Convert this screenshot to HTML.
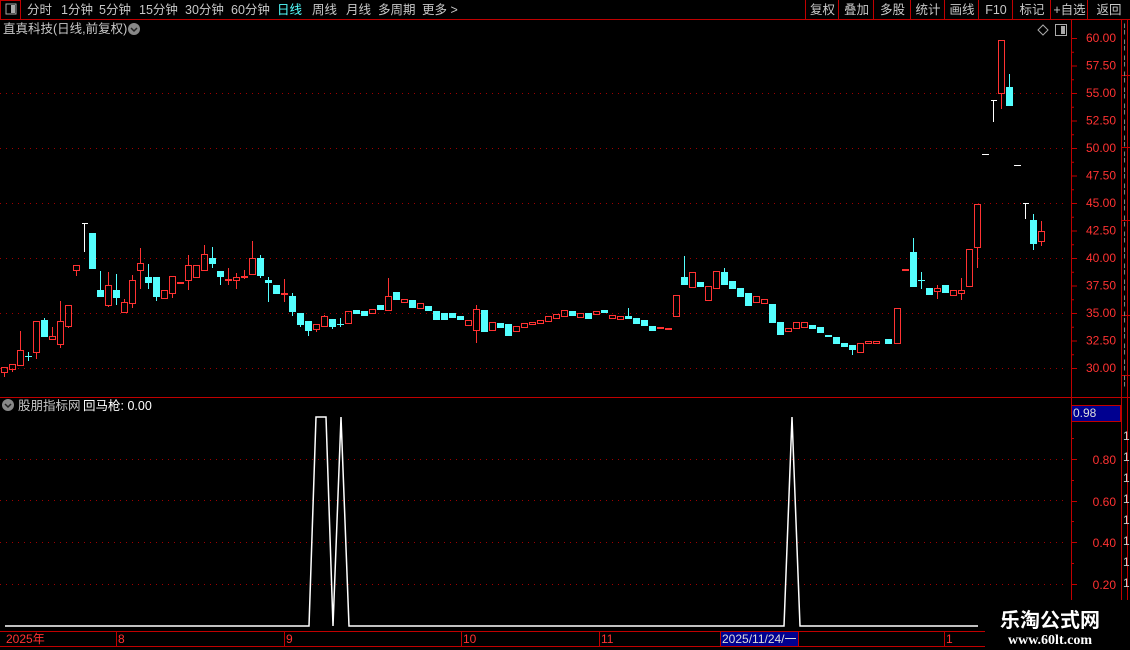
<!DOCTYPE html>
<html><head><meta charset="utf-8"><style>
body{margin:0;background:#000;width:1130px;height:650px;overflow:hidden;font-family:"Liberation Sans","Noto Sans CJK SC",sans-serif;}
svg{position:absolute;left:0;top:0}
</style></head><body>
<svg id="s" width="1130" height="650" xmlns="http://www.w3.org/2000/svg" font-family="Liberation Sans, Noto Sans CJK SC, sans-serif"></svg>
<script>
var s=document.getElementById('s'),h='';
function R(x,y,w,hh,f,st){h+='<rect x="'+x+'" y="'+y+'" width="'+w+'" height="'+hh+'" fill="'+(f||'none')+'"'+(st?' stroke="'+st+'" stroke-width="1"':'')+'/>';}
function L(x1,y1,x2,y2,c,da){h+='<line x1="'+x1+'" y1="'+y1+'" x2="'+x2+'" y2="'+y2+'" stroke="'+c+'" stroke-width="1"'+(da?' stroke-dasharray="'+da+'"':'')+'/>';}
function T(x,y,t,c,sz,a){h+='<text x="'+x+'" y="'+y+'" fill="'+c+'" font-size="'+(sz||12)+'"'+(a?' text-anchor="'+a+'"':'')+'>'+t+'</text>';}
var RED='#ff3232',CY='#54ffff',DR='#c00000';
L(0,19.5,1130,19.5,DR);R(0.5,0.5,20,19,'none',DR);R(6,4,10,10,'none','#aaa');R(11,5,4,8,'#aaa');
var tb=[['分时',27],['1分钟',61],['5分钟',99],['15分钟',139],['30分钟',185],['60分钟',231],['日线',277],['周线',312],['月线',346],['多周期',378],['更多 >',422]];
tb.forEach(function(a){T(a[1],14,a[0],a[0]=='日线'?CY:'#c8c8c8',12.5)});
var rb=['复权','叠加','多股','统计','画线','F10','标记','+自选','返回'],rx=[806,839,874,911,945,979,1013,1051,1088,1130];
for(var i=0;i<rb.length;i++){L(rx[i]-0.5,0,rx[i]-0.5,19,DR);T((rx[i]+rx[i+1])/2,14,rb[i],'#c8c8c8',12.5,'middle');}
T(3,33,'直真科技(日线,前复权)','#c8c8c8',12.5);h+='<circle cx="134" cy="29" r="6" fill="#888"/><path d="M131 28l3 3 3-3" stroke="#222" stroke-width="1.5" fill="none"/>';
h+='<path d="M1043 25l5 5-5 5-5-5z" stroke="#aaa" fill="none"/>';R(1055.5,24.5,11,11,'none','#aaa');R(1061,26,4,8,'#aaa');
[93,148,203,258,313,368].forEach(function(y){L(0,y+.5,1065,y+.5,'#a00000','1 5')});
[459,500,542,584].forEach(function(y){L(0,y+.5,1065,y+.5,'#a00000','1 5')});
L(1071.5,20,1071.5,630,DR);L(1121.5,20,1121.5,650,DR);L(1127.5,20,1127.5,650,DR);
for(var p=60;p>=30;p-=2.5){var y=38+(60-p)*11;L(1071,y+.5,1077,y+.5,DR);T(1116,y+4,p.toFixed(2),RED,12,'end');}
for(var p=58.75;p>29;p-=2.5){var y=38+(60-p)*11;L(1071,y+.5,1074,y+.5,DR);}
[0.8,0.6,0.4,0.2].forEach(function(v){var y=Math.round(626-v*209);L(1071,y+.5,1077,y+.5,DR);T(1116,y+5,v.toFixed(2),RED,12,'end');});
[438,480,521,563,605].forEach(function(y){L(1071,y+.5,1074,y+.5,DR)});
[75,147,220,315,375].forEach(function(y){L(1122,y+.5,1130,y+.5,DR)});
for(var y=32;y<390;y+=16)T(1123,y,'¦','#888',12);
for(var y=440;y<600;y+=21)T(1123,y,'1','#ccc',12);
var C=[[1,'r',367,372,0,377],[9,'r',364,369,0,372],[17,'r',350,365,331,0],[25,'x',356,356,352,361],[33,'r',321,352,0,359],[41,'c',320,337,318,0],[49,'r',336,339,327,340],[57,'r',321,344,301,348],[65,'r',305,326,0,328],[73,'r',265,270,0,276],[81,'w',223,252,223,252],[89,'c',233,269,0,0],[97,'c',290,297,271,0],[105,'r',285,305,272,307],[113,'c',290,298,274,305],[121,'r',302,312,299,313],[129,'r',280,303,275,308],[137,'r',263,270,248,289],[145,'c',277,283,264,289],[153,'c',277,297,0,301],[161,'r',290,298,0,299],[169,'r',276,293,0,298],[177,'d',283,283,0,0],[185,'r',265,280,255,290],[193,'r',265,277,0,0],[201,'r',254,270,245,271],[209,'c',258,264,247,268],[217,'c',271,277,0,285],[225,'d',280,280,268,285],[233,'r',277,280,273,289],[241,'d',277,277,270,279],[249,'r',258,274,241,275],[257,'c',258,276,255,278],[265,'c',280,283,277,302],[273,'c',285,294,0,0],[281,'d',294,294,279,302],[289,'c',296,312,293,316],[297,'c',313,325,0,327],[305,'c',321,331,0,336],[313,'r',324,329,0,332],[321,'r',316,326,315,0],[329,'c',319,327,0,329],[337,'x',324,324,318,327]];
var E=[[345,'r',311,323],[353,'c',310,314],[361,'c',311,316],[369,'r',309,313],[377,'c',305,310],[385,'r',296,310,278],[393,'c',292,300],[401,'r',299,302],[409,'c',300,308],[417,'r',303,308],[425,'c',306,311],[433,'c',311,320],[441,'c',313,320],[449,'c',313,318],[457,'c',316,320],[465,'r',320,325],[473,'r',309,330,305,343],[481,'c',310,332],[489,'r',322,330],[497,'c',323,328],[505,'c',324,336],[513,'r',326,331],[521,'r',323,327],[529,'r',322,324],[537,'r',320,323],[545,'r',316,321],[553,'r',314,318],[561,'r',310,316],[569,'c',311,316],[577,'r',313,317],[585,'c',313,319],[593,'r',311,314],[601,'c',310,313],[609,'r',315,318],[617,'r',316,319],[625,'c',316,319,308],[633,'c',318,324],[641,'c',320,326],[649,'c',326,331],[657,'d',328,328],[665,'d',329,329],[673,'r',295,316],[681,'c',277,285,256],[689,'r',272,287],[697,'c',282,287],[705,'r',286,300],[713,'r',271,288],[721,'c',272,285,268],[729,'c',281,289],[737,'c',288,297],[745,'c',293,306],[753,'r',296,302],[761,'r',299,303],[769,'c',304,323],[777,'c',322,335],[785,'r',328,331],[793,'r',322,328],[801,'r',322,327],[809,'c',325,329],[817,'c',327,333],[825,'c',335,337],[833,'c',337,344],[841,'c',343,347],[849,'c',345,350,0,355],[857,'r',343,352],[865,'r',341,343],[873,'r',341,343],[885,'c',339,344],[894,'r',308,343],[902,'d',270,270],[910,'c',252,287,238,0],[918,'x',280,280,272,289],[926,'c',288,295],[934,'r',288,291,285,299],[942,'c',285,293],[950,'r',290,295],[958,'r',290,293,278,300],[966,'r',249,286],[974,'r',204,247,0,268],[982,'wd',154,154],[990,'w',100,122,100,122],[998,'r',40,93,0,109],[1006,'c',87,106,74,0],[1014,'wd',165,165],[1022,'w',203,219,203,219],[1030,'c',220,244,214,250],[1038,'r',231,241,221,246]];
C=C.concat(E);
C.forEach(function(c){var x=c[0],t=c[1],a=c[2],b=c[3],hi=c[4]||a,lo=c[5]||b,m=x+3.5;
 if(t=='w'){L(m,a,m,b,'#fff');L(x+1,a+.5,x+7,a+.5,'#fff');return;}
 if(t=='wd'){L(x,a+.5,x+7,a+.5,'#fff');return;}
 var col=(t=='c'||t=='x')?CY:RED;
 if(hi<a)L(m,hi,m,a,col);if(lo>b)L(m,b,m,lo,col);
 if(t=='x'){L(m,hi,m,lo,col);L(x,a+.5,x+7,a+.5,col);return;}
 if(t=='d'){R(x,a-1,7,2,RED);return;}
 if(t=='c')R(x,a,7,Math.max(b-a,2),CY);else R(x+.5,a+.5,6,Math.max(b-a,2),'none',RED);
});
L(0,397.5,1130,397.5,DR);
h+='<circle cx="8" cy="405" r="6" fill="#888"/><path d="M5 404l3 3 3-3" stroke="#222" stroke-width="1.5" fill="none"/>';
T(18,410,'股朋指标网','#c8c8c8',12.5);T(83,410,'回马枪: 0.00','#fff',12.5);
R(1071.5,405.5,49,16,'#000090',DR);T(1073,417,'0.98','#ddd',12);
h+='<polyline fill="none" stroke="#fff" stroke-width="1.5" points="5,626 309,626 316,417 326,417 333,626 341,417 349,626 784,626 792,417 800,626 978,626"/>';
L(0,631.5,1130,631.5,DR);L(0,646.5,1130,646.5,DR);
[[5,'2025年'],[117,'8'],[285,'9'],[462,'10'],[600,'11'],[945,'1']].forEach(function(a){if(a[0]>5)L(a[0]-.5,632,a[0]-.5,646,DR);T(a[0]+1,643,a[1],RED,12);});
R(720.5,631.5,78,15,'#000090',DR);T(722,643,'2025/11/24/一','#ddd',12);
R(985,600,145,50,'#000');
h+='<text x="1050" y="627" fill="#fff" font-size="20" font-weight="bold" text-anchor="middle" font-family="Noto Sans CJK SC,sans-serif">乐淘公式网</text>';
h+='<text x="1050" y="644" fill="#fff" font-size="14" font-weight="bold" text-anchor="middle" font-family="Liberation Serif,serif">www.60lt.com</text>';
s.innerHTML=h;
</script>
</body></html>
